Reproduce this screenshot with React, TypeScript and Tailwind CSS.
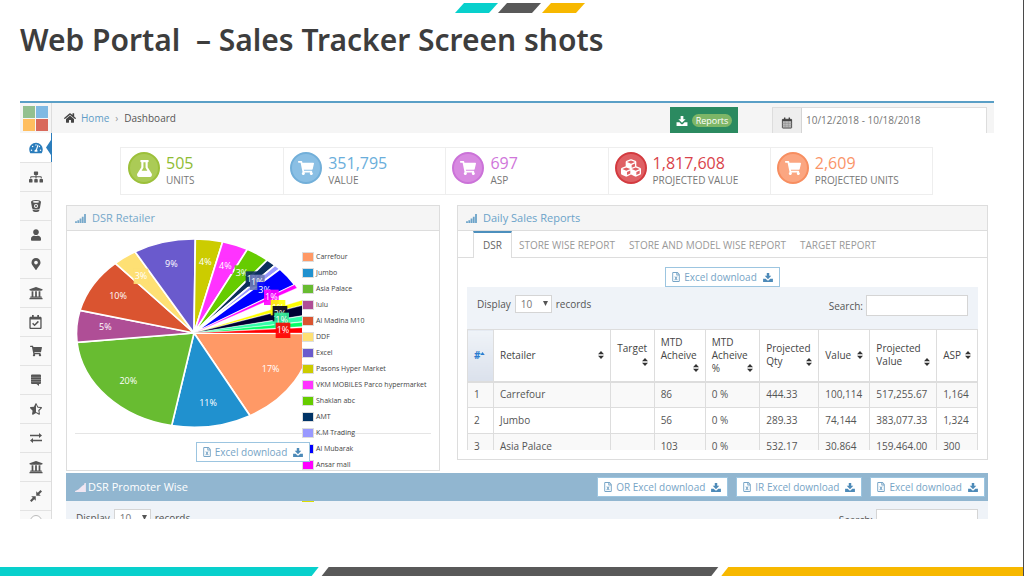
import React from "react";
import {
  FaTachometerAlt,
  FaSitemap,
  FaUser,
  FaMapMarkerAlt,
  FaUniversity,
  FaRegCalendarCheck,
  FaShoppingCart,
  FaStarHalfAlt,
  FaFlask,
  FaCubes,
  FaHome,
  FaRegFileExcel,
} from "react-icons/fa";

type IconProps = { className?: string };

function BucketIcon({ className }: IconProps) {
  return (
    <svg viewBox="0 0 24 24" className={className} fill="currentColor" aria-hidden="true">
      <path
        fillRule="evenodd"
        d="M12 0C6 0 2 1.600 2 4l2.200 12.500C5 18 8.200 19 12 19s7-1 7.800-2.500L22 4c0-2.400-4-4-10-4Zm0 2.200c3.800 0 6.500.7 6.500 1.600S15.800 5.400 12 5.400 5.500 4.700 5.500 3.800 8.200 2.200 12 2.200Zm0 5.800a4 4 0 1 1 0 8 4 4 0 0 1 0-8Z"
      />
      <circle cx="12" cy="12" r="2" />
      <path d="M5 19c2 1.200 4.300 1.600 7 1.600s5-.4 7-1.600l-.7 3c-1.300 1.300-3.500 2-6.300 2s-5-.7-6.300-2Z" />
    </svg>
  );
}

function NoteIcon({ className }: IconProps) {
  return (
    <svg viewBox="0 0 24 24" className={className} fill="currentColor" aria-hidden="true">
      <path d="M4 1h16a2 2 0 0 1 2 2v15a2 2 0 0 1-2 2h-2v4l-5-4H4a2 2 0 0 1-2-2V3a2 2 0 0 1 2-2Z" />
      <path d="M2 6.500h20M2 11h20M2 15.500h20" stroke="#aaa" strokeWidth="1.200" />
    </svg>
  );
}

function SwapIcon({ className }: IconProps) {
  return (
    <svg viewBox="0 0 24 24" className={className} fill="currentColor" aria-hidden="true">
      <path d="M0 5.500h18V2L24 7l-6 5V8.500H0ZM24 15.500H6V12L0 17l6 5v-3.500h18Z" />
    </svg>
  );
}

function CompressIcon({ className }: IconProps) {
  return (
    <svg viewBox="0 0 24 24" className={className} fill="currentColor" aria-hidden="true">
      <path d="M12.500 11.500V2.500l3 3L21 0l3 3-5.500 5.500 3 3ZM11.500 12.500v9l-3-3L3 24l-3-3 5.500-5.500-3-3Z" />
    </svg>
  );
}

function DownloadIcon({ className }: IconProps) {
  return (
    <svg viewBox="0 0 24 22" className={className} fill="currentColor" aria-hidden="true">
      <path d="M9 0h6v7h5l-8 8-8-8h5ZM0 14h6.500l3 3a3.500 3.500 0 0 0 5 0l3-3H24v8H0Z" />
    </svg>
  );
}

function CalendarIcon({ className }: IconProps) {
  return (
    <svg viewBox="0 0 24 26" className={className} aria-hidden="true">
      <rect x="2" y="5" width="20" height="19" rx="1" fill="#bbb" stroke="#444" strokeWidth="2" />
      <path d="M2 5h20v4H2Z" fill="#444" />
      <path d="M7 1v5M17 1v5" stroke="#444" strokeWidth="3" />
      <path d="M2 14h20M2 19h20M8 9v15M15 9v15" stroke="#888" strokeWidth="1" />
    </svg>
  );
}

function SignalIcon({ className }: IconProps) {
  return (
    <svg viewBox="0 0 12 10" className={className} fill="currentColor" aria-hidden="true">
      <path d="M0 8h2v2H0ZM2.500 7h2v3h-2ZM5 5h2v5H5ZM7.500 3h2v7h-2ZM10 0h2v10h-2Z" />
    </svg>
  );
}

function WedgeIcon({ className }: IconProps) {
  return (
    <svg viewBox="0 0 12 10" className={className} fill="currentColor" aria-hidden="true">
      <path d="M0 10V9l2-1 2-1 2-2 2-2 2-1 .5-2H12v10Z" />
    </svg>
  );
}

function SortIcon() {
  return (
    <svg viewBox="0 0 6 8" className="h-2 w-[6px] shrink-0" fill="#333" aria-hidden="true">
      <path d="M3 0l3 3.200H0ZM3 8L0 4.800h6Z" />
    </svg>
  );
}

function DownloadButton({ label }: { label: string }) {
  return (
    <button
      type="button"
      className="flex h-5 shrink-0 items-center gap-1 whitespace-nowrap border border-[#9cc5e0] bg-white px-[6px] text-[10px] leading-4 text-[#76a4c6]"
    >
      <FaRegFileExcel className="h-[10px] w-2" />
      {label}
      <DownloadIcon className="ml-[2px] h-[9px] w-[10px] text-[#4d8ab8]" />
    </button>
  );
}

const navItems = [
  { label: "Dashboard", icon: <FaTachometerAlt className="h-3 w-[14px]" /> },
  { label: "Hierarchy", icon: <FaSitemap className="h-3 w-[14px]" /> },
  { label: "Stock", icon: <BucketIcon className="h-3 w-3" /> },
  { label: "Users", icon: <FaUser className="h-3 w-[10px]" /> },
  { label: "Locations", icon: <FaMapMarkerAlt className="h-3 w-[10px]" /> },
  { label: "Stores", icon: <FaUniversity className="h-[14px] w-[14px]" /> },
  { label: "Calendar", icon: <FaRegCalendarCheck className="h-[14px] w-[13px]" /> },
  { label: "Sales", icon: <FaShoppingCart className="h-3 w-3" /> },
  { label: "Messages", icon: <NoteIcon className="h-3 w-3" /> },
  { label: "Ratings", icon: <FaStarHalfAlt className="h-3 w-3" /> },
  { label: "Transfers", icon: <SwapIcon className="h-3 w-[14px]" /> },
  { label: "Banks", icon: <FaUniversity className="h-[14px] w-[14px]" /> },
  { label: "Compress", icon: <CompressIcon className="h-3 w-3" /> },
];

const stats = [
  { value: "505", label: "UNITS", text: "text-[#8fbc34]", circle: "border-[#9cc03a] bg-[#abcb56]", icon: <FaFlask className="h-[17px] w-[17px]" /> },
  { value: "351,795", label: "VALUE", text: "text-[#6aaedb]", circle: "border-[#72afd9] bg-[#8abfe4]", icon: <FaShoppingCart className="h-4 w-4" /> },
  { value: "697", label: "ASP", text: "text-[#cf76da]", circle: "border-[#cb72d8] bg-[#d88ae1]", icon: <FaShoppingCart className="h-4 w-4" /> },
  { value: "1,817,608", label: "PROJECTED VALUE", text: "text-[#d9434a]", circle: "border-[#d33a3f] bg-[#df6064]", icon: <FaCubes className="h-5 w-5" /> },
  { value: "2,609", label: "PROJECTED UNITS", text: "text-[#fa9468]", circle: "border-[#f78e60] bg-[#fba681]", icon: <FaShoppingCart className="h-4 w-4" /> },
];

const legend = [
  { name: "Carrefour", color: "bg-[#ff9966]" },
  { name: "Jumbo", color: "bg-[#2091cf]" },
  { name: "Asia Palace", color: "bg-[#68bc31]" },
  { name: "lulu", color: "bg-[#af4e96]" },
  { name: "Al Madina M10", color: "bg-[#da5430]" },
  { name: "DDF", color: "bg-[#fee074]" },
  { name: "Excel", color: "bg-[#6a5acd]" },
  { name: "Pasons Hyper Market", color: "bg-[#cccc00]" },
  { name: "VKM MOBILES Parco hypermarket", color: "bg-[#ff33ff]" },
  { name: "Shaklan abc", color: "bg-[#66cc00]" },
  { name: "AMT", color: "bg-[#003366]" },
  { name: "K.M Trading", color: "bg-[#9999ff]" },
  { name: "Al Mubarak", color: "bg-[#0000ff]" },
  { name: "Ansar mall", color: "bg-[#ff00ff]" },
  { name: "", color: "bg-white" },
  { name: "", color: "border-[#dddd00] bg-[#dddd00]" },
];

/* Points where each wedge starts and ends on the rim, clockwise. */
const wedges = [
  { from: [754, 400], to: [570, 647], fill: "#ff9966" },
  { from: [570, 647], to: [335, 677], fill: "#2091cf" },
  { from: [335, 677], to: [51, 427], fill: "#68bc31" },
  { from: [51, 427], to: [60, 331], fill: "#af4e96" },
  { from: [60, 331], to: [166, 190], fill: "#da5430" },
  { from: [166, 190], to: [225, 155], fill: "#fee074" },
  { from: [225, 155], to: [406, 117], fill: "#6a5acd" },
  { from: [406, 117], to: [488, 125], fill: "#cccc00" },
  { from: [488, 125], to: [562, 148], fill: "#ff33ff" },
  { from: [562, 148], to: [622, 180], fill: "#66cc00" },
  { from: [622, 180], to: [645, 196], fill: "#0b2f5c" },
  { from: [645, 196], to: [660, 207], fill: "#9999ff" },
  { from: [660, 207], to: [704, 254], fill: "#0000ff" },
  { from: [704, 254], to: [711, 264], fill: "#ff00ff" },
  { from: [735, 298], to: [740, 311], fill: "#ffff00" },
  { from: [741, 313], to: [749, 343], fill: "#000033" },
  { from: [749, 345], to: [752, 362], fill: "#33ffaa" },
  { from: [752, 364], to: [753, 378], fill: "#00ff66" },
  { from: [753, 382], to: [754, 399], fill: "#ff0000" },
];

const slices = [
  { x: 632, y: 516, t: "17%" },
  { x: 444, y: 617, t: "11%" },
  { x: 205, y: 551, t: "20%" },
  { x: 136, y: 391, t: "5%" },
  { x: 174, y: 298, t: "10%" },
  { x: 243, y: 238, t: "3%", bg: "#fee074" },
  { x: 334, y: 202, t: "9%" },
  { x: 436, y: 195, t: "4%" },
  { x: 496, y: 208, t: "4%", bg: "#ff33ff" },
  { x: 546, y: 228, t: "3%", bg: "#66cc00" },
  { x: 579, y: 246, t: "1%", bg: "#0b2f5c" },
  { x: 592, y: 256, t: "1%", bg: "#6a78b8" },
  { x: 614, y: 278, t: "3%", bg: "#0000ff" },
  { x: 634, y: 301, t: "1%", bg: "#ff00ff" },
  { x: 654, y: 332, t: "1%", bg: "#ffff00" },
  { x: 660, y: 350, t: "2%", bg: "#000022" },
  { x: 665, y: 370, t: "1%", bg: "#33ee99" },
  { x: 669, y: 400, t: "1%", bg: "#ff0000" },
];

function RetailerPie() {
  return (
    <svg viewBox="30 93 696 612" className="h-[204px] w-[232px] shrink-0" role="img" aria-label="DSR Retailer share">
      {wedges.map((w) => (
        <path
          key={w.from.join()}
          d={`M402 399L${w.from[0]} ${w.from[1]}A352 283 0 0 1 ${w.to[0]} ${w.to[1]}Z`}
          fill={w.fill}
          stroke="#fff"
          strokeWidth={w.from[0] > 700 && w.from[1] < 399 ? 1 : 5}
        />
      ))}
      {slices.map((s) => (
        <g key={`${s.x}-${s.y}`}>
          {s.bg && <rect x={s.x - 22} y={s.y - 32} width="44" height="46" fill={s.bg} fillOpacity="0.9" />}
          <text x={s.x} y={s.y} textAnchor="middle" fill="#fff" fontSize="27" fontWeight="500">
            {s.t}
          </text>
        </g>
      ))}
    </svg>
  );
}

const columns = [
  { lines: ["Retailer"], width: "w-[23%]" },
  { lines: ["Target", ""], width: "w-[8.500%]" },
  { lines: ["MTD", "Acheive", ""], width: "w-[10%]" },
  { lines: ["MTD", "Acheive", "%"], width: "w-[10.700%]" },
  { lines: ["Projected", "Qty"], width: "w-[11.600%]" },
  { lines: ["Value"], width: "w-[10%]" },
  { lines: ["Projected", "Value"], width: "w-[13.100%]" },
  { lines: ["ASP"], width: "w-[8%]" },
];

const rows = [
  ["1", "Carrefour", "", "86", "0 %", "444.33", "100,114", "517,255.67", "1,164"],
  ["2", "Jumbo", "", "56", "0 %", "289.33", "74,144", "383,077.33", "1,324"],
  ["3", "Asia Palace", "", "103", "0 %", "532.17", "30,864", "159,464.00", "300"],
];

function ReportTable() {
  return (
    <table className="w-full table-fixed border-collapse text-left text-[10px] leading-[13px] text-[#555]">
      <thead>
        <tr className="h-[52px] border-b-2 border-[#ddd]">
          <th className="w-[5.100%] border border-[#ddd] bg-linear-to-b from-[#eff3f8] to-[#dbe1ec] px-[6px] font-bold text-[#2b7dd0]">
            <span className="flex items-center">
              #
              <svg viewBox="0 0 6 4" className="mb-1 h-[3px] w-[5px]" fill="currentColor" aria-hidden="true">
                <path d="M3 0l3 4H0Z" />
              </svg>
            </span>
          </th>
          {columns.map((c) => (
            <th key={c.lines.join()} className={`${c.width} border border-[#ddd] px-[6px] font-medium text-[#444]`}>
              {c.lines.slice(0, -1).map((l) => (
                <span key={l} className="block">
                  {l}
                </span>
              ))}
              <span className="flex h-[13px] items-center justify-between">
                <span>{c.lines[c.lines.length - 1]}</span>
                <SortIcon />
              </span>
            </th>
          ))}
        </tr>
      </thead>
      <tbody>
        {rows.map((r) => (
          <tr key={r[0]} className="h-[26px] odd:bg-[#f9f9f9]">
            {r.map((v, i) => (
              <td key={i} className="whitespace-nowrap border border-[#ddd] px-[6px]">
                {v}
              </td>
            ))}
          </tr>
        ))}
      </tbody>
    </table>
  );
}

function TableControls({ id }: { id: string }) {
  return (
    <div className="flex items-start justify-between px-[10px] pt-2 text-[10px] leading-4 text-[#555]">
      <div className="flex items-center gap-1">
        <label htmlFor={`${id}-size`}>Display</label>
        <span className="relative flex">
          <select
            id={`${id}-size`}
            className="h-[18px] w-[37px] appearance-none border border-[#d5d5d5] bg-white pl-[5px] text-[10px] leading-4 text-[#777]"
          >
            <option>10</option>
          </select>
          <svg viewBox="0 0 6 6" className="pointer-events-none absolute right-1 top-[6px] h-[5px] w-[5px]" fill="#555" aria-hidden="true">
            <path d="M0 0h6L3 6Z" />
          </svg>
        </span>
        <span>records</span>
      </div>
      <div className="flex items-center gap-[3px]">
        <label htmlFor={`${id}-search`}>Search:</label>
        <input id={`${id}-search`} type="text" className="h-[21px] w-[102px] border border-[#d5d5d5] bg-white px-1" />
      </div>
    </div>
  );
}

export default function App() {
  return (
    <div className="flex h-screen flex-col overflow-hidden border-r border-[#4a4a4a] bg-white font-['Open_Sans',sans-serif]">
      <header className="flex h-[101px] shrink-0 flex-col">
        <svg viewBox="0 0 130 11" className="ml-4 mt-[2px] h-[11px] w-[130px] self-center" aria-hidden="true">
          <path d="M9 1H43L34 11H0Z" fill="#08d0cc" />
          <path d="M52 1H86L77 11H43Z" fill="#595959" />
          <path d="M96 1H130L121 11H87Z" fill="#f7b800" />
        </svg>
        <h1 className="whitespace-pre pl-5 pt-[6px] font-['Noto_Sans',sans-serif] text-[30px] font-semibold leading-[42px] text-[#3d3d3d]">
          {"Web Portal  – Sales Tracker Screen shots"}
        </h1>
      </header>

      <div className="mb-12 ml-5 mr-[29px] flex min-h-0 flex-1 items-start overflow-hidden border-t-2 border-[#5a9fc6]">
        <nav aria-label="Main" className="w-8 shrink-0 border-r border-[#ddd] bg-[#f9f9f9]">
          <div className="grid h-[30px] grid-cols-[12px_12px] content-center justify-center gap-px bg-[#f5f5f5]">
            <span className="h-3 bg-[#93c08f]" />
            <span className="h-3 bg-[#7fb9e3]" />
            <span className="h-3 bg-[#ffbe5f]" />
            <span className="h-3 bg-[#d9695b]" />
          </div>
          {navItems.map((n, i) => (
            <a
              key={n.label}
              href="#"
              aria-label={n.label}
              className={
                i === 0
                  ? "relative flex h-[29px] items-center justify-center bg-white text-[#2b7dbc]"
                  : "flex h-[29px] items-center justify-center border-t border-[#e3e3e3] text-[#555]"
              }
            >
              {n.icon}
              {i === 0 && (
                <svg viewBox="0 0 6 29" className="absolute -right-px top-0 h-[29px] w-[6px]" fill="#2b7dbc" aria-hidden="true">
                  <path d="M5 0h1v29H5v-7L0 14.500 5 7Z" />
                </svg>
              )}
            </a>
          ))}
          <div className="flex h-[29px] items-start justify-center border-t border-[#e3e3e3] pt-1">
            <span className="h-3 w-3 rounded-full border border-[#bbb] bg-white" />
          </div>
        </nav>

        <main className="min-w-0 flex-1">
          <div className="flex h-[30px] items-start bg-[#f5f5f5] pl-3 pr-[7px] text-[10px]">
            <nav aria-label="Breadcrumb" className="flex h-[30px] flex-1 items-center text-[#555]">
              <FaHome className="mr-[5px] h-3 w-3 text-[#444]" />
              <a href="#" className="text-[#5f9cc7]">
                Home
              </a>
              <span className="mx-[6px] text-[#999]">›</span>
              <span>Dashboard</span>
            </nav>
            <button type="button" className="mr-[34px] mt-1 flex h-[26px] w-[68px] items-center justify-center gap-1 bg-[#2b8a60] pt-px text-[9px] text-white">
              <DownloadIcon className="h-[10px] w-3" />
              <span className="rounded-full bg-[#7db667] px-1 leading-[13px]">Reports</span>
            </button>
            <div className="mt-1 flex h-[26px] w-[215px] border border-b-0 border-[#ddd]">
              <span className="flex w-[29px] items-center justify-center border-r border-[#d5d5d5] bg-[#eee] pt-1">
                <CalendarIcon className="h-3 w-3" />
              </span>
              <input aria-label="Date range" defaultValue="10/12/2018 - 10/18/2018" className="min-w-0 flex-1 bg-white px-1 text-[10px] text-[#777]" />
            </div>
          </div>

          <section className="ml-[68px] mr-[61px] mt-[14px] grid h-12 grid-cols-5 border border-[#eee]">
            {stats.map((s, i) => (
              <div key={s.label} className={i ? "flex gap-[6px] border-l border-[#eee] pl-[6px] pt-1" : "flex gap-[6px] pl-[7px] pt-1"}>
                <span className={`flex h-8 w-8 shrink-0 items-center justify-center rounded-full border-2 text-white ${s.circle}`}>{s.icon}</span>
                <span className="flex flex-col whitespace-nowrap">
                  <span className={`text-[16px] leading-[22px] ${s.text}`}>{s.value}</span>
                  <span className="text-[10px] leading-3 text-[#777]">{s.label}</span>
                </span>
              </div>
            ))}
          </section>

          <div className="ml-[14px] mr-[6px] mt-[10px] grid grid-cols-[374fr_531fr] items-start gap-x-[17px]">
            <section className="relative z-10 flex h-[266px] flex-col border border-[#ddd]">
              <h2 className="flex h-[25px] shrink-0 items-center gap-[6px] border-b border-[#ddd] bg-[#f5f5f5] pl-2 text-[11px] text-[#76a8ca]">
                <SignalIcon className="h-[9px] w-[11px]" />
                DSR Retailer
              </h2>
              <div className="absolute inset-x-2 bottom-9 border-t border-[#e5e5e5]" />
              <div className="relative flex pl-[3px]">
                <RetailerPie />
                <ul className="pt-[18px]">
                  {legend.map((l, i) => (
                    <li key={i} className="flex h-4 items-center gap-[2px] whitespace-nowrap text-[7px] text-[#444]">
                      <span className={`h-[10px] w-3 border border-[#ddd] ${l.color}`} />
                      {l.name}
                    </li>
                  ))}
                </ul>
              </div>
              <div className="absolute inset-x-2 bottom-2 flex justify-center">
                <DownloadButton label="Excel download" />
              </div>
            </section>

            <section className="border border-[#ddd] pb-[9px]">
              <h2 className="flex h-[25px] items-center gap-[6px] border-b border-[#ddd] bg-[#f5f5f5] pl-2 text-[11px] text-[#6ba3c9]">
                <SignalIcon className="h-[9px] w-[11px]" />
                Daily Sales Reports
              </h2>
              <div role="tablist" className="flex h-[27px] items-end border-b border-[#ddd] pl-[15px] text-[10px] text-[#999]">
                <button role="tab" aria-selected="true" className="-mb-px h-[27px] border border-b-0 border-t-2 border-[#ddd] border-t-[#4c8fbd] bg-white px-[9px] text-[#666]">
                  DSR
                </button>
                <button role="tab" aria-selected="false" className="h-6 px-[7px]">STORE WISE REPORT</button>
                <button role="tab" aria-selected="false" className="h-6 px-[7px]">STORE AND MODEL WISE REPORT</button>
                <button role="tab" aria-selected="false" className="h-6 px-[7px]">TARGET REPORT</button>
              </div>
              <div className="mx-[9px] h-[192px] overflow-hidden pt-[9px]">
                <div className="flex justify-center">
                  <DownloadButton label="Excel download" />
                </div>
                <div className="h-[42px] bg-[#eff3f8]">
                  <TableControls id="daily" />
                </div>
                <ReportTable />
              </div>
            </section>
          </div>

          <section className="ml-[14px] mr-[6px] mt-[2px]">
            <div className="relative z-20 flex h-7 items-center gap-2 bg-[#91b6d0] pl-[9px] pr-[3px]">
              <h2 className="flex flex-1 items-center gap-[2px] text-[11px] text-white">
                <WedgeIcon className="h-[9px] w-[11px] text-[#f0e6f2]" />
                DSR Promoter Wise
              </h2>
              <DownloadButton label="OR Excel download" />
              <DownloadButton label="IR Excel download" />
              <DownloadButton label="Excel download" />
            </div>
            <div className="h-12 bg-[#eff3f8]">
              <TableControls id="promoter" />
            </div>
          </section>
        </main>
      </div>

      <svg viewBox="0 0 1024 9" preserveAspectRatio="none" className="h-[9px] w-full shrink-0" aria-hidden="true">
        <path d="M0 0H319L312 9H0Z" fill="#08d0cc" />
        <path d="M329 0H719L712 9H322Z" fill="#595959" />
        <path d="M729 0H1024V9H722Z" fill="#f7b800" />
      </svg>
    </div>
  );
}
